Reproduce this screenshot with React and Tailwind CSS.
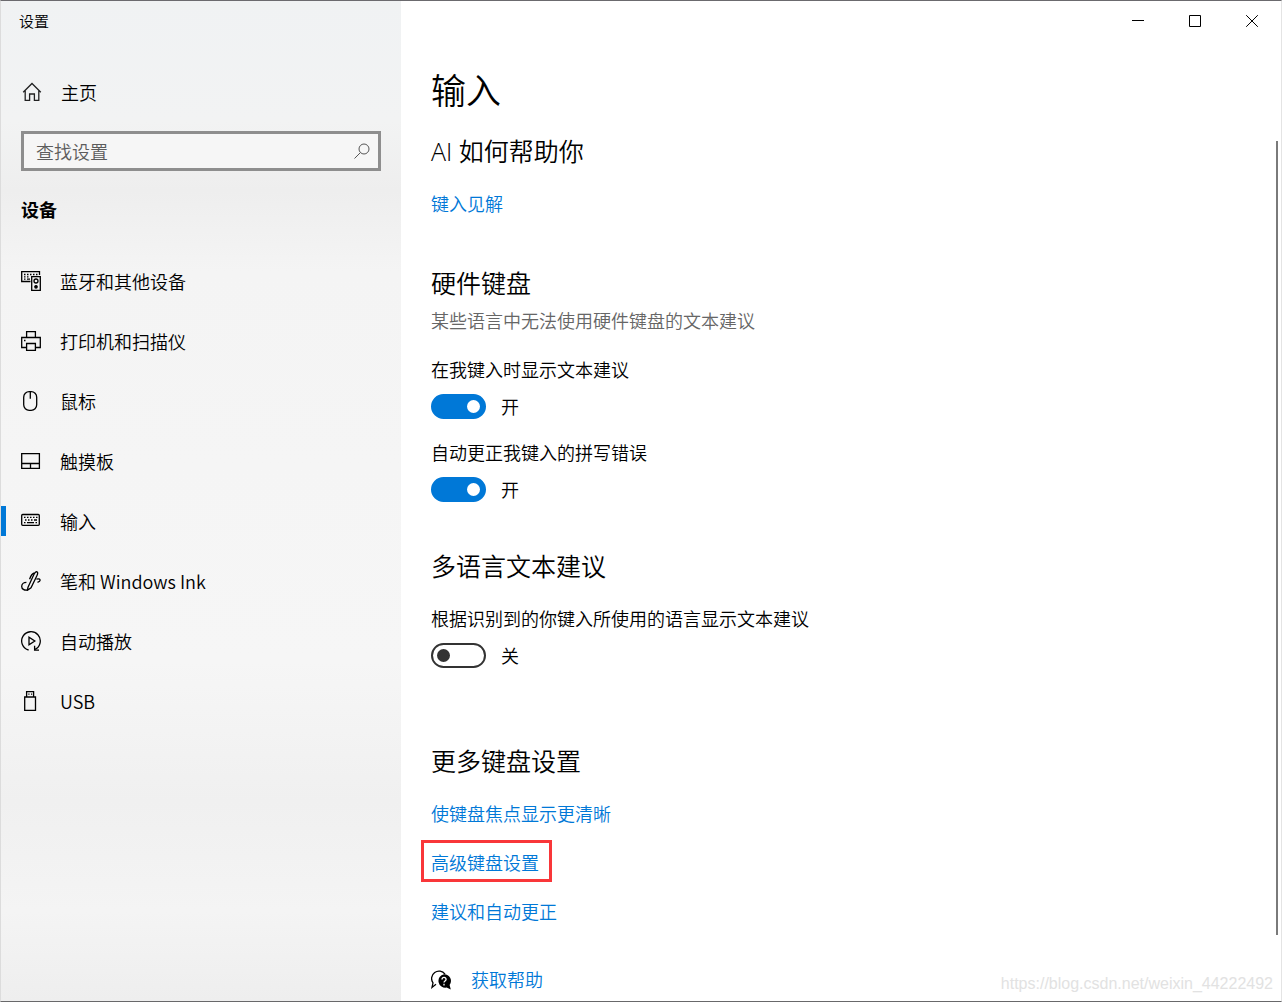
import { useState } from 'react';

const iconProps = {
    width: 20,
    height: 20,
    viewBox: '0 0 20 20',
    fill: 'none',
    stroke: '#000',
    strokeWidth: 1.3,
    'aria-hidden': true
};

const icons = {
    home: (
        <svg {...iconProps}>
            <path d="M1.2 10.3 10 1.5l8.8 8.8M3.2 8.6v9.8h4.4v-6.4h4.8v6.4h4.4V8.6" stroke="#222" />
        </svg>
    ),
    devices: (
        <svg {...iconProps}>
            <path d="M9.5 10.5H.7V.7h17.8V4" />
            <path d="M3 3.5h1.5M6 3.5h1.5M9 3.5h1.5M12 3.5h1.5M15 3.5h1.5M3 5.8h1.5M6 5.8h1.5M3 8.1h1.5M6 8.1h3" />
            <path d="M10.7 5.6h8.6v13.7h-8.6z" />
            <circle cx="15" cy="10" r="2" />
            <circle cx="15" cy="15.8" r="1.2" fill="#000" />
        </svg>
    ),
    printer: (
        <svg {...iconProps}>
            <path d="M5.6 6.5V.7h8.8v5.8M5.6 16.5H.7v-10h18.6v10h-4.9M5.6 12.5h8.8v6.8H5.6z" />
            <path d="M3 9.5h1.5" />
        </svg>
    ),
    mouse: (
        <svg {...iconProps}>
            <rect x="2.7" y=".7" width="13" height="18.6" rx="5.5" />
            <path d="M9.3 .7v7" />
        </svg>
    ),
    touchpad: (
        <svg {...iconProps}>
            <path d="M.7 2.6h17.7v14.7H.7zM.7 12.5h17.7M9.5 12.5v4.8" />
        </svg>
    ),
    keyboard: (
        <svg {...iconProps}>
            <rect x=".7" y="3.5" width="17.6" height="10.8" rx="1" />
            <path d="M3 6.4h1.5M6 6.4h1.5M9 6.4h1.5M12 6.4h1.5M15 6.4h1.5M4 9h1.5M7 9h1.5M10 9h1.5M13 9h3M3 11.6h1.5M6 11.6h7M14.5 11.6H16" />
        </svg>
    ),
    pen: (
        <svg {...iconProps}>
            <path d="M7 16.2 13 3.2c.9-1.9 2-2.8 3-2.3 1 .5.9 1.7 0 3.6l-6 12.3-3.6 2.5z" />
            <path d="M13.4 2c-2.4.6-3.6 2.6-4.8 6.2M5.4 11.4c-2.7 0-4.7 1.6-4.7 4 0 2.6 2.6 4 5.5 3.6M15.4 8.2c1.8-.5 3.4-.3 3.7.7.2 1-1 1.8-2.6 2.4" />
        </svg>
    ),
    autoplay: (
        <svg {...iconProps}>
            <path d="M7.6 19A9.3 9.3 0 1 1 14 18.4" />
            <path d="M18 19.2h-4.4v-4.4" />
            <path d="M8 6.3v7.4l5.8-3.7z" />
        </svg>
    ),
    usb: (
        <svg {...iconProps}>
            <path d="M3.7 6h10.8v13.3H3.7zM5.6 6V.7h7V6" />
            <path d="M7.3 3.2h1.2M10 3.2h1.2" />
        </svg>
    ),
    help: (
        <svg {...iconProps}>
            <path d="M5 14.2 1 17.4l1-4.6A6.9 6.9 0 1 1 14 4.2" />
            <path d="M13 4.2a6.8 6.8 0 0 1 5.6 10.8l1.2 4.6-4.2-2A6.8 6.8 0 1 1 13 4.2z" fill="#000" stroke="none" />
            <path d="M11 9.4c.1-2.8 4.2-2.6 4.1 0-.1 1.6-2.1 1.5-2.1 3.2M13 13.8v1.6" stroke="#fff" />
        </svg>
    )
};

const navItems = [
    { id: 'devices', label: '蓝牙和其他设备' },
    { id: 'printer', label: '打印机和扫描仪' },
    { id: 'mouse', label: '鼠标' },
    { id: 'touchpad', label: '触摸板' },
    { id: 'keyboard', label: '输入' },
    { id: 'pen', label: '笔和 Windows Ink' },
    { id: 'autoplay', label: '自动播放' },
    { id: 'usb', label: 'USB' }
];

function Sidebar() {
    const [active, setActive] = useState('keyboard');
    const [query, setQuery] = useState('');

    return (
        <aside className="w-[400px] shrink-0 bg-[linear-gradient(180deg,#f0f2f3_0%,#f2f3f3_12%,#eeeeee_19%,#f4f4f4_27%,#f6f6f6_66%,#f0f0f0_80%,#f4f4f4_91%,#eeeeee_100%)] pt-2 font-['Noto_Sans_CJK_SC',sans-serif]">
            <div className="pl-[18px] text-[15px] leading-6">设置</div>
            <a href="#home" className="mt-[47px] flex items-center gap-[19px] pl-[21px]">
                {icons.home}
                <span>主页</span>
            </a>
            <div className="mt-[27px] ml-5 mr-5 flex h-10 items-center border-3 border-[#8e8e8e] bg-[#f6f6f6] pl-3 pr-2">
                <input
                    type="text"
                    aria-label="查找设置"
                    placeholder="查找设置"
                    value={query}
                    onChange={(e) => setQuery(e.target.value)}
                    className="min-w-0 flex-1 bg-transparent outline-none placeholder:text-[#5c5c5c]"
                />
                <svg width="16" height="16" viewBox="0 0 16 16" fill="none" stroke="#555" aria-hidden="true">
                    <circle cx="10" cy="6" r="5" />
                    <path d="M6.4 9.6.5 15.5" />
                </svg>
            </div>
            <h2 className="mt-[26px] pl-5 font-bold">设备</h2>
            <nav className="mt-[30px]">
                {navItems.map((item) => (
                    <a
                        key={item.id}
                        href={`#${item.id}`}
                        onClick={() => setActive(item.id)}
                        className="flex h-[60px] items-center"
                    >
                        <span className={item.id === active ? 'h-[30px] w-[5px] bg-[#0078d7]' : 'h-[30px] w-[5px]'} />
                        <span className="ml-[15px] mr-[19px]">{icons[item.id]}</span>
                        <span>{item.label}</span>
                    </a>
                ))}
            </nav>
        </aside>
    );
}

function WindowControls() {
    return (
        <div className="mr-px flex h-10 justify-end">
            <button type="button" aria-label="最小化" className="flex w-[57px] items-center justify-center">
                <svg width="12" height="12" viewBox="0 0 12 12" stroke="#000" fill="none">
                    <path d="M0 5.5h12" />
                </svg>
            </button>
            <button type="button" aria-label="最大化" className="flex w-[57px] items-center justify-center">
                <svg width="12" height="12" viewBox="0 0 12 12" stroke="#000" fill="none">
                    <path d="M.5 .5h11v11H.5z" />
                </svg>
            </button>
            <button type="button" aria-label="关闭" className="flex w-[57px] items-center justify-center">
                <svg width="12" height="12" viewBox="0 0 12 12" stroke="#000" fill="none">
                    <path d="M.2 .2l11.6 11.6M11.8 .2.2 11.8" />
                </svg>
            </button>
        </div>
    );
}

function Toggle({ id, label, initial }) {
    const [on, setOn] = useState(initial);

    return (
        <div>
            <label htmlFor={id} className="block">{label}</label>
            <div className="mt-3 flex h-[25px] items-center gap-[15px]">
                <input
                    id={id}
                    type="checkbox"
                    role="switch"
                    checked={on}
                    onChange={() => setOn(!on)}
                    className="flex h-[25px] w-[55px] appearance-none items-center rounded-full border-2 border-[#333] px-1 before:size-[13px] before:rounded-full before:bg-[#333] checked:justify-end checked:border-[#0078d7] checked:bg-[#0078d7] checked:before:bg-white"
                />
                <span>{on ? '开' : '关'}</span>
            </div>
        </div>
    );
}

function Heading({ children }) {
    return <h2 className="text-[25px] leading-8">{children}</h2>;
}

function Link({ href, children }) {
    return <a href={href} className="text-[#0078d7]">{children}</a>;
}

function App() {
    return (
        <div className="relative flex min-h-screen border border-t-[#6b6a6e] border-r-[#e4e4e4] border-b-[#68686a] border-l-[#dcdcdc] bg-white font-['Open_Sans','Noto_Sans_CJK_SC',sans-serif] text-[18px] leading-6 font-[350] text-black">
            <Sidebar />
            <div className="flex min-w-0 flex-1 flex-col">
                <WindowControls />
                <div className="flex flex-1">
                    <main className="flex-1 pt-[26px] pl-[30px] pb-2">
                        <h1 className="text-[35px] leading-[48px]">输入</h1>

                        <section className="mt-5 flex flex-col items-start gap-[25px]">
                            <Heading>AI 如何帮助你</Heading>
                            <Link href="#insights">键入见解</Link>
                        </section>

                        <section className="mt-[51px]">
                            <Heading>硬件键盘</Heading>
                            <p className="mt-[10px] text-[#666]">某些语言中无法使用硬件键盘的文本建议</p>
                            <div className="mt-[25px] flex flex-col gap-[22px]">
                                <Toggle id="suggestions" label="在我键入时显示文本建议" initial={true} />
                                <Toggle id="autocorrect" label="自动更正我键入的拼写错误" initial={true} />
                            </div>
                        </section>

                        <section className="mt-12 flex flex-col gap-[25px]">
                            <Heading>多语言文本建议</Heading>
                            <Toggle id="multilingual" label="根据识别到的你键入所使用的语言显示文本建议" initial={false} />
                        </section>

                        <section className="mt-[77px] flex flex-col items-start gap-[25px]">
                            <Heading>更多键盘设置</Heading>
                            <Link href="#focus">使键盘焦点显示更清晰</Link>
                            <div className="-mt-[11px] -mb-[7px] -ml-[10px] border-3 border-[#f93639] pt-2 pr-[10px] pb-1 pl-[7px]">
                                <Link href="#advanced">高级键盘设置</Link>
                            </div>
                            <Link href="#typing">建议和自动更正</Link>
                        </section>

                        <div className="mt-11 flex items-center gap-5">
                            {icons.help}
                            <Link href="#help">获取帮助</Link>
                        </div>
                    </main>
                    <div className="mt-[100px] mr-[3px] mb-[66px] w-[2px] bg-[#7a7a7a]" />
                </div>
            </div>
            <div className="absolute right-2 bottom-[5px] font-['Liberation_Sans',sans-serif] text-[16px] font-normal text-[#e2e2e2]">
                https://blog.csdn.net/weixin_44222492
            </div>
        </div>
    );
}

export default App;
